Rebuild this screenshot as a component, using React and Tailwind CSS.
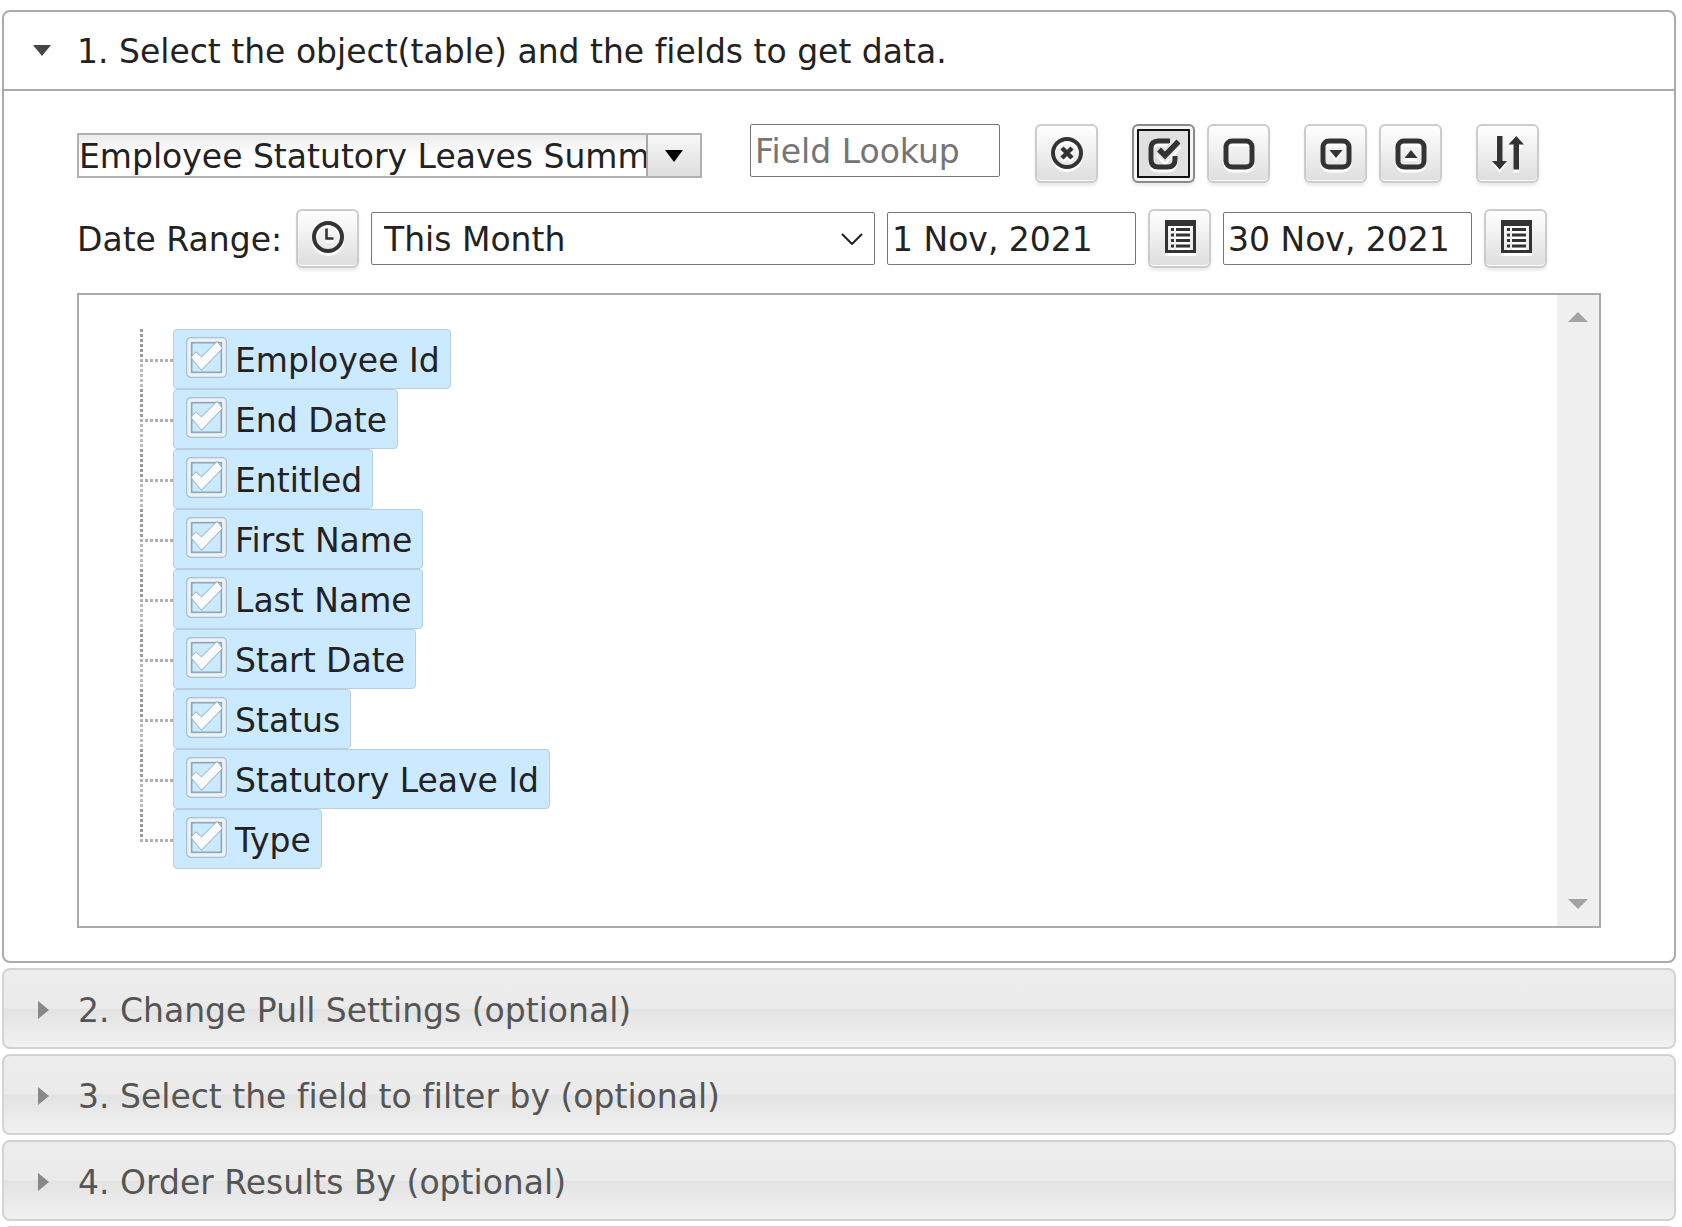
import { useState } from "react";

const FIELDS = [
  "Employee Id",
  "End Date",
  "Entitled",
  "First Name",
  "Last Name",
  "Start Date",
  "Status",
  "Statutory Leave Id",
  "Type",
];

const SECTIONS = [
  "2. Change Pull Settings (optional)",
  "3. Select the field to filter by (optional)",
  "4. Order Results By (optional)",
];

// square toolbar button, children are drawn in a 36x36 box
function IconButton({ label, active, children }) {
  return (
    <button
      type="button"
      aria-label={label}
      className={
        active
          ? "flex h-[59px] w-[63px] shrink-0 items-center justify-center rounded-md border-2 border-[#8a8a8a] bg-[#e0e0e0] shadow-[inset_0_0_0_3px_#f5f5f5,0_3px_3px_rgba(0,0,0,0.08)] outline-2 -outline-offset-[7px] outline-[#111]"
          : "flex h-[59px] w-[63px] shrink-0 items-center justify-center rounded-md border-2 border-[#ccc] bg-linear-to-b from-white to-[#dedede] shadow-[inset_0_-1px_0_#fff,0_3px_3px_rgba(0,0,0,0.08)]"
      }
    >
      <svg
        viewBox="0 0 36 36"
        fill="none"
        stroke="#333"
        className="size-9 overflow-visible drop-shadow-[0_3px_0_#fff]"
      >
        {children}
      </svg>
    </button>
  );
}

function CalendarIcon() {
  return (
    <>
      <path d="M3 -1h31v33H3zM6 5v24h25V5z" fill="#333" stroke="none" fillRule="evenodd" />
      <path
        d="M9 8.5h3M14 8.5h14M9 14h3M14 14h14M9 19.5h3M14 19.5h14M9 25h3M14 25h14"
        strokeWidth="2.8"
      />
    </>
  );
}

// dotted branch lines to the left of a field
function Branch({ last }) {
  return (
    <svg width="33" height="60" viewBox="0 0 33 60" className="shrink-0" aria-hidden="true">
      <path d="M1.5 0V30" stroke="#999" strokeWidth="3" strokeDasharray="3 2" />
      {!last && <path d="M1.5 35V60" stroke="#bbb" strokeWidth="3" strokeDasharray="3 2" />}
      <path d="M0 31.5H33" stroke="#b0b0b0" strokeWidth="3" strokeDasharray="3 2" />
    </svg>
  );
}

function FieldItem({ name, last }) {
  const [checked, setChecked] = useState(true);

  return (
    <li className="flex">
      <Branch last={last} />
      <label className="flex h-[60px] items-center gap-2 rounded border border-[#b9cfdf] bg-[#cbe9ff] pr-2.5 pl-3 whitespace-nowrap">
        <span className="grid pb-1">
          <input
            type="checkbox"
            checked={checked}
            onChange={() => setChecked(!checked)}
            className="col-start-1 row-start-1 size-[41px] appearance-none"
          />
          <svg
            viewBox="0 0 41 41"
            className="pointer-events-none col-start-1 row-start-1 size-[41px] overflow-visible"
          >
            <rect x="1" y="1" width="39" height="39" rx="4" fill="none" stroke="#7f9aad" strokeWidth="2" opacity="0.5" />
            <rect x="5.5" y="5.5" width="30" height="30" fill="none" stroke="#8ba8bc" strokeWidth="2" />
            <rect x="3" y="3" width="35" height="35" rx="2" fill="none" stroke="#f0f1f3" strokeWidth="3.4" />
            {checked && (
              <>
                <path
                  d="M6 20.500L10 16L15.500 21L31 5.500L35.500 11.500L15.500 32Z"
                  fill="none"
                  stroke="#8ba8bc"
                  strokeWidth="2.800"
                  strokeLinejoin="round"
                  opacity="0.6"
                />
                <path
                  d="M6 20.500L10 16L15.500 21L31 5.500L35.500 11.500L15.500 32Z"
                  fill="#fafafa"
                  stroke="#fafafa"
                  strokeLinejoin="round"
                />
              </>
            )}
          </svg>
        </span>
        <span className="pt-1">{name}</span>
      </label>
    </li>
  );
}

export default function App() {
  const [lookup, setLookup] = useState("");

  return (
    <main className="flex h-screen flex-col gap-[5px] overflow-hidden bg-white pt-2.5 pr-1.5 pl-0.5 font-['DejaVu_Sans',Verdana,sans-serif] text-[33px] leading-10 text-[#222] [font-variant-ligatures:none]">
      <section className="shrink-0 rounded-lg border-2 border-[#aaa]">
        <h3 className="border-b-2 border-[#aaa]">
          <button type="button" className="flex h-[77px] w-full items-center gap-[25px] pl-7 text-left">
            <svg viewBox="0 0 20 12" className="h-3 w-5">
              <path d="M1 0h18l-9 11z" fill="#454545" />
            </svg>
            <span className="pt-0.5">1. Select the object(table) and the fields to get data.</span>
          </button>
        </h3>

        <div className="px-[73px] py-[33px]">
          <div className="flex items-start">
            <div className="mt-[9px] mr-12 flex h-[45px] w-[625px] border-2 border-[#b0b0b0]">
              <input
                aria-label="Object"
                readOnly
                value="Employee Statutory Leaves Summary"
                className="min-w-0 flex-1 bg-linear-to-b from-[#ececec] to-white to-50% pt-0.5 outline-none"
              />
              <button
                type="button"
                aria-label="Show all objects"
                className="flex w-[54px] items-center justify-center border-l-2 border-[#aaa] bg-linear-to-b from-[#f8f8f8] to-[#dedede]"
              >
                <svg viewBox="0 0 18 12" className="h-3 w-[18px]">
                  <path d="M0 0h18l-9 12z" fill="#000" />
                </svg>
              </button>
            </div>
            <input
              aria-label="Field Lookup"
              placeholder="Field Lookup"
              value={lookup}
              onChange={(e) => setLookup(e.target.value)}
              className="h-[53px] w-[250px] rounded-xs border border-[#767676] bg-white pt-0.5 pl-1 placeholder:text-[#757575]"
            />
            <div className="ml-[35px] flex gap-[34px]">
              <IconButton label="Clear lookup">
                <circle cx="18" cy="17" r="14" strokeWidth="4" />
                <path d="M13 12l10 10M23 12l-10 10" strokeWidth="4.4" />
              </IconButton>
              <div className="flex gap-3">
                <IconButton label="Select all" active>
                  <path d="M24 5H12.500Q5 5 5 12.500V23.500Q5 31 12.500 31H21.500Q29 31 29 23.500V20" strokeWidth="5" />
                  <path d="M13.500 13.500L19 19.500L32 5.500" stroke="#e6e6e6" strokeWidth="10" />
                  <path d="M13 13.500L19 19.500L32.500 5.500" strokeWidth="5.500" />
                </IconButton>
                <IconButton label="Unselect all">
                  <rect x="5" y="5" width="26" height="26" rx="6" strokeWidth="5" />
                </IconButton>
              </div>
              <div className="flex gap-3">
                <IconButton label="Expand all">
                  <rect x="5" y="5" width="26" height="26" rx="6" strokeWidth="5" />
                  <path d="M11.500 14h13l-6.500 8z" fill="#333" stroke="none" />
                </IconButton>
                <IconButton label="Collapse all">
                  <rect x="5" y="5" width="26" height="26" rx="6" strokeWidth="5" />
                  <path d="M11.500 22h13l-6.500-8z" fill="#333" stroke="none" />
                </IconButton>
              </div>
              <IconButton label="Sort fields">
                <path
                  d="M7 0h5.500v25H17l-7.250 8.500L2 25h5zM23.500 33.500h5.500v-25h5L26.250 0L18.500 8.500h5z"
                  fill="#333"
                  stroke="none"
                />
              </IconButton>
            </div>
          </div>

          <div className="mt-[26px] flex items-center gap-3">
            <label htmlFor="range" className="w-[207px] pt-0.5 whitespace-nowrap">
              Date Range:
            </label>
            <IconButton label="Set date range">
              <circle cx="18" cy="16" r="14" strokeWidth="4" />
              <path d="M16.500 7.500V17.500H23.500" strokeWidth="2.600" />
            </IconButton>
            <div className="grid w-[504px] items-center">
              <select
                id="range"
                className="col-start-1 row-start-1 h-[53px] appearance-none rounded-xs border border-[#767676] bg-white pt-0.5 pl-3"
              >
                <option>This Month</option>
              </select>
              <svg
                viewBox="0 0 22 12"
                fill="none"
                stroke="#222"
                strokeWidth="2"
                className="pointer-events-none col-start-1 row-start-1 mr-3 h-3 w-[22px] justify-self-end"
              >
                <path d="M1 1l10 10L21 1" />
              </svg>
            </div>
            <input
              aria-label="From date"
              defaultValue="1 Nov, 2021"
              className="h-[53px] w-[249px] rounded-xs border border-[#767676] bg-white pt-0.5 pl-1"
            />
            <IconButton label="Pick from date">
              <CalendarIcon />
            </IconButton>
            <input
              aria-label="To date"
              defaultValue="30 Nov, 2021"
              className="h-[53px] w-[249px] rounded-xs border border-[#767676] bg-white pt-0.5 pl-1"
            />
            <IconButton label="Pick to date">
              <CalendarIcon />
            </IconButton>
          </div>

          <div className="mt-[25px] flex h-[635px] border-2 border-[#aaa]">
            <ul className="flex-1 pt-[34px] pl-[61px]">
              {FIELDS.map((name, i) => (
                <FieldItem key={name} name={name} last={i === FIELDS.length - 1} />
              ))}
            </ul>
            <div className="flex w-[42px] flex-col items-center justify-between bg-[#f0f0f0] py-[17px]">
              <svg viewBox="0 0 20 10" className="h-2.5 w-5">
                <path d="M0 10h20L10 0z" fill="#a3a3a3" />
              </svg>
              <svg viewBox="0 0 20 10" className="h-2.5 w-5">
                <path d="M0 0h20L10 10z" fill="#a3a3a3" />
              </svg>
            </div>
          </div>
        </div>
      </section>

      {SECTIONS.map((title) => (
        <h3
          key={title}
          className="shrink-0 rounded-lg border-2 border-[#d3d3d3] bg-[linear-gradient(#ededed,#ebebeb_49%,#e3e3e3_51%,#f1f1f1)] text-[#555]"
        >
          <button type="button" className="flex h-[77px] w-full items-center gap-[29px] pt-0.5 pl-[34px] text-left">
            <svg viewBox="0 0 11 18" className="h-[18px] w-[11px]">
              <path d="M0 0v18l11-9z" fill="#888" />
            </svg>
            <span className="pt-0.5">{title}</span>
          </button>
        </h3>
      ))}
      <div className="h-[81px] shrink-0 rounded-lg border-2 border-[#d3d3d3] bg-[#ededed]" />
    </main>
  );
}
